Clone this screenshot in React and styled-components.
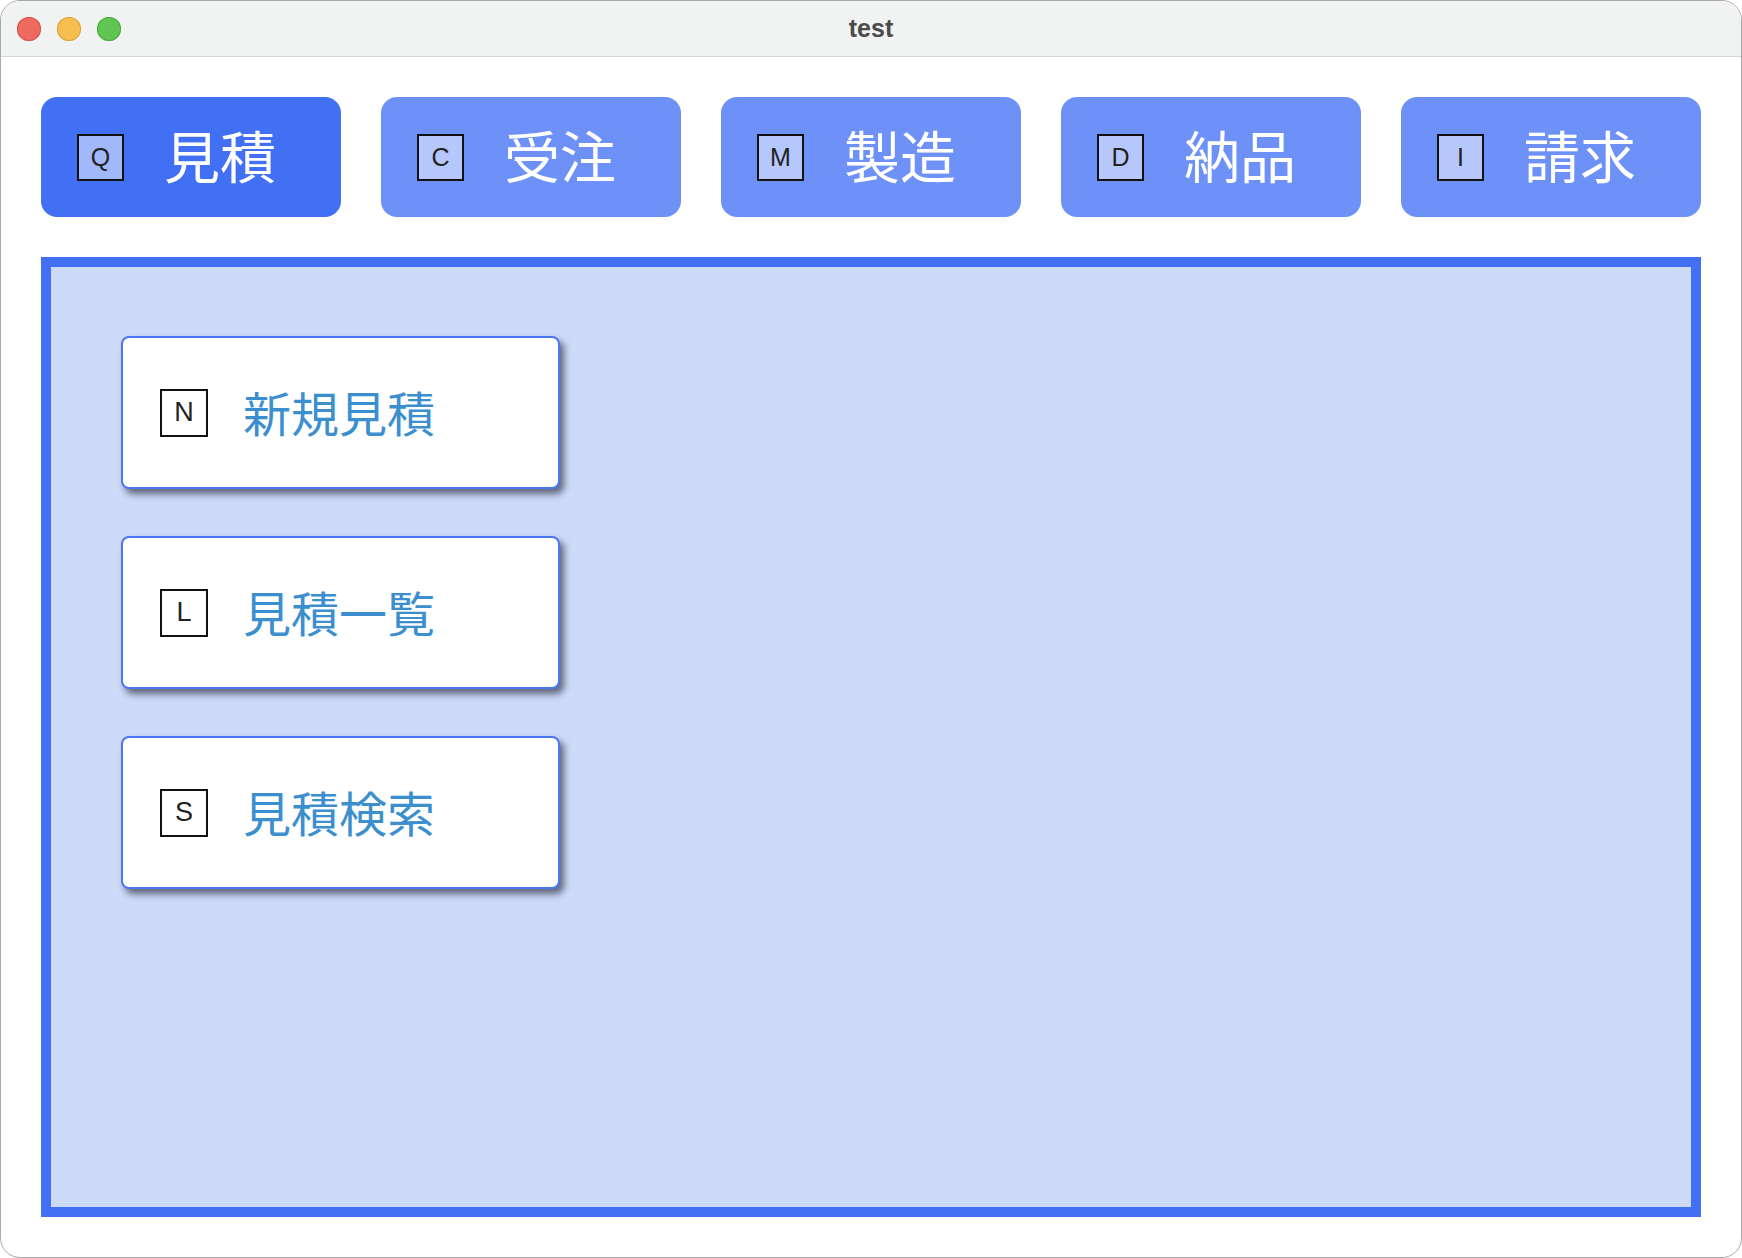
import React from "react";
import styled, { createGlobalStyle } from "styled-components";

const GlobalStyle = createGlobalStyle`
  html, body {
    margin: 0;
    padding: 0;
    background: #ffffff;
  }
  * {
    box-sizing: border-box;
  }
`;

const tabs = [
  { key: "Q", label: "見積", active: true },
  { key: "C", label: "受注" },
  { key: "M", label: "製造" },
  { key: "D", label: "納品" },
  { key: "I", label: "請求" },
];

const items = [
  { key: "N", label: "新規見積" },
  { key: "L", label: "見積一覧" },
  { key: "S", label: "見積検索" },
];

const App = () => {
  return (
    <>
      <GlobalStyle />
      <Window>
        <TitleBar>
          <Lights>
            <Light color="#ee6a5f" edge="#d4544a" />
            <Light color="#f5be4f" edge="#d9a23a" />
            <Light color="#61c554" edge="#4ca83f" />
          </Lights>
          <Title>test</Title>
        </TitleBar>
        <Content>
          <TabRow>
            {tabs.map((t) => (
              <Tab key={t.key} $active={t.active}>
                <TabKey>{t.key}</TabKey>
                <TabLabel>{t.label}</TabLabel>
              </Tab>
            ))}
          </TabRow>
          <Panel>
            {items.map((it) => (
              <Card key={it.key}>
                <CardKey>{it.key}</CardKey>
                <CardLabel>{it.label}</CardLabel>
              </Card>
            ))}
          </Panel>
        </Content>
      </Window>
    </>
  );
};

export default App;

const Window = styled.div`
  width: 1742px;
  height: 1258px;
  border: 1px solid #a9a9a9;
  border-radius: 20px;
  overflow: hidden;
  background: #ffffff;
  display: flex;
  flex-direction: column;
`;

const TitleBar = styled.div`
  position: relative;
  height: 56px;
  flex-shrink: 0;
  background: #f1f2f2;
  border-bottom: 1px solid #d5d5d5;
  display: flex;
  align-items: center;
  justify-content: center;
`;

const Lights = styled.div`
  position: absolute;
  left: 16px;
  top: 16px;
  display: flex;
  gap: 16px;
`;

const Light = styled.span`
  width: 24px;
  height: 24px;
  border-radius: 50%;
  background: ${(p) => p.color};
  box-shadow: inset 0 0 0 1px ${(p) => p.edge};
`;

const Title = styled.div`
  font-family: "Liberation Sans", Arial, sans-serif;
  font-weight: bold;
  font-size: 25px;
  color: #4b4b4b;
`;

const Content = styled.div`
  flex: 1;
  padding: 40px;
  display: flex;
  flex-direction: column;
  gap: 40px;
`;

const TabRow = styled.div`
  display: flex;
  gap: 40px;
`;

const Tab = styled.div`
  width: 300px;
  height: 120px;
  border-radius: 16px;
  background: ${(p) => (p.$active ? "#4270f4" : "#6d91f6")};
  display: flex;
  align-items: center;
  padding-left: 36px;
  gap: 40px;
`;

const TabKey = styled.div`
  width: 47px;
  height: 47px;
  border: 2px solid #111111;
  background: rgba(255, 255, 255, 0.5);
  display: flex;
  align-items: center;
  justify-content: center;
  font-family: "Liberation Sans", Arial, sans-serif;
  font-size: 25px;
  color: #222222;
`;

const TabLabel = styled.div`
  font-family: "Noto Sans CJK JP", "Noto Sans CJK SC", sans-serif;
  font-size: 56px;
  color: #ffffff;
  line-height: 1;
  margin-top: -6px;
`;

const Panel = styled.div`
  flex: 1;
  border: 10px solid #4270f4;
  background: #cddaf8;
  padding: 69px 70px;
  display: flex;
  flex-direction: column;
  gap: 47px;
`;

const Card = styled.div`
  width: 439px;
  height: 153px;
  border: 2px solid #4a78f2;
  border-radius: 8px;
  background: #ffffff;
  box-shadow: 4px 5px 7px rgba(20, 20, 40, 0.6);
  display: flex;
  align-items: center;
  padding-left: 37px;
  gap: 35px;
`;

const CardKey = styled.div`
  width: 48px;
  height: 48px;
  border: 2px solid #111111;
  background: #ffffff;
  display: flex;
  align-items: center;
  justify-content: center;
  font-family: "Liberation Sans", Arial, sans-serif;
  font-size: 27px;
  color: #222222;
`;

const CardLabel = styled.div`
  font-family: "Noto Sans CJK JP", "Noto Sans CJK SC", sans-serif;
  font-size: 48px;
  color: #3b8fcf;
  line-height: 1;
  margin-top: -4px;
`;
